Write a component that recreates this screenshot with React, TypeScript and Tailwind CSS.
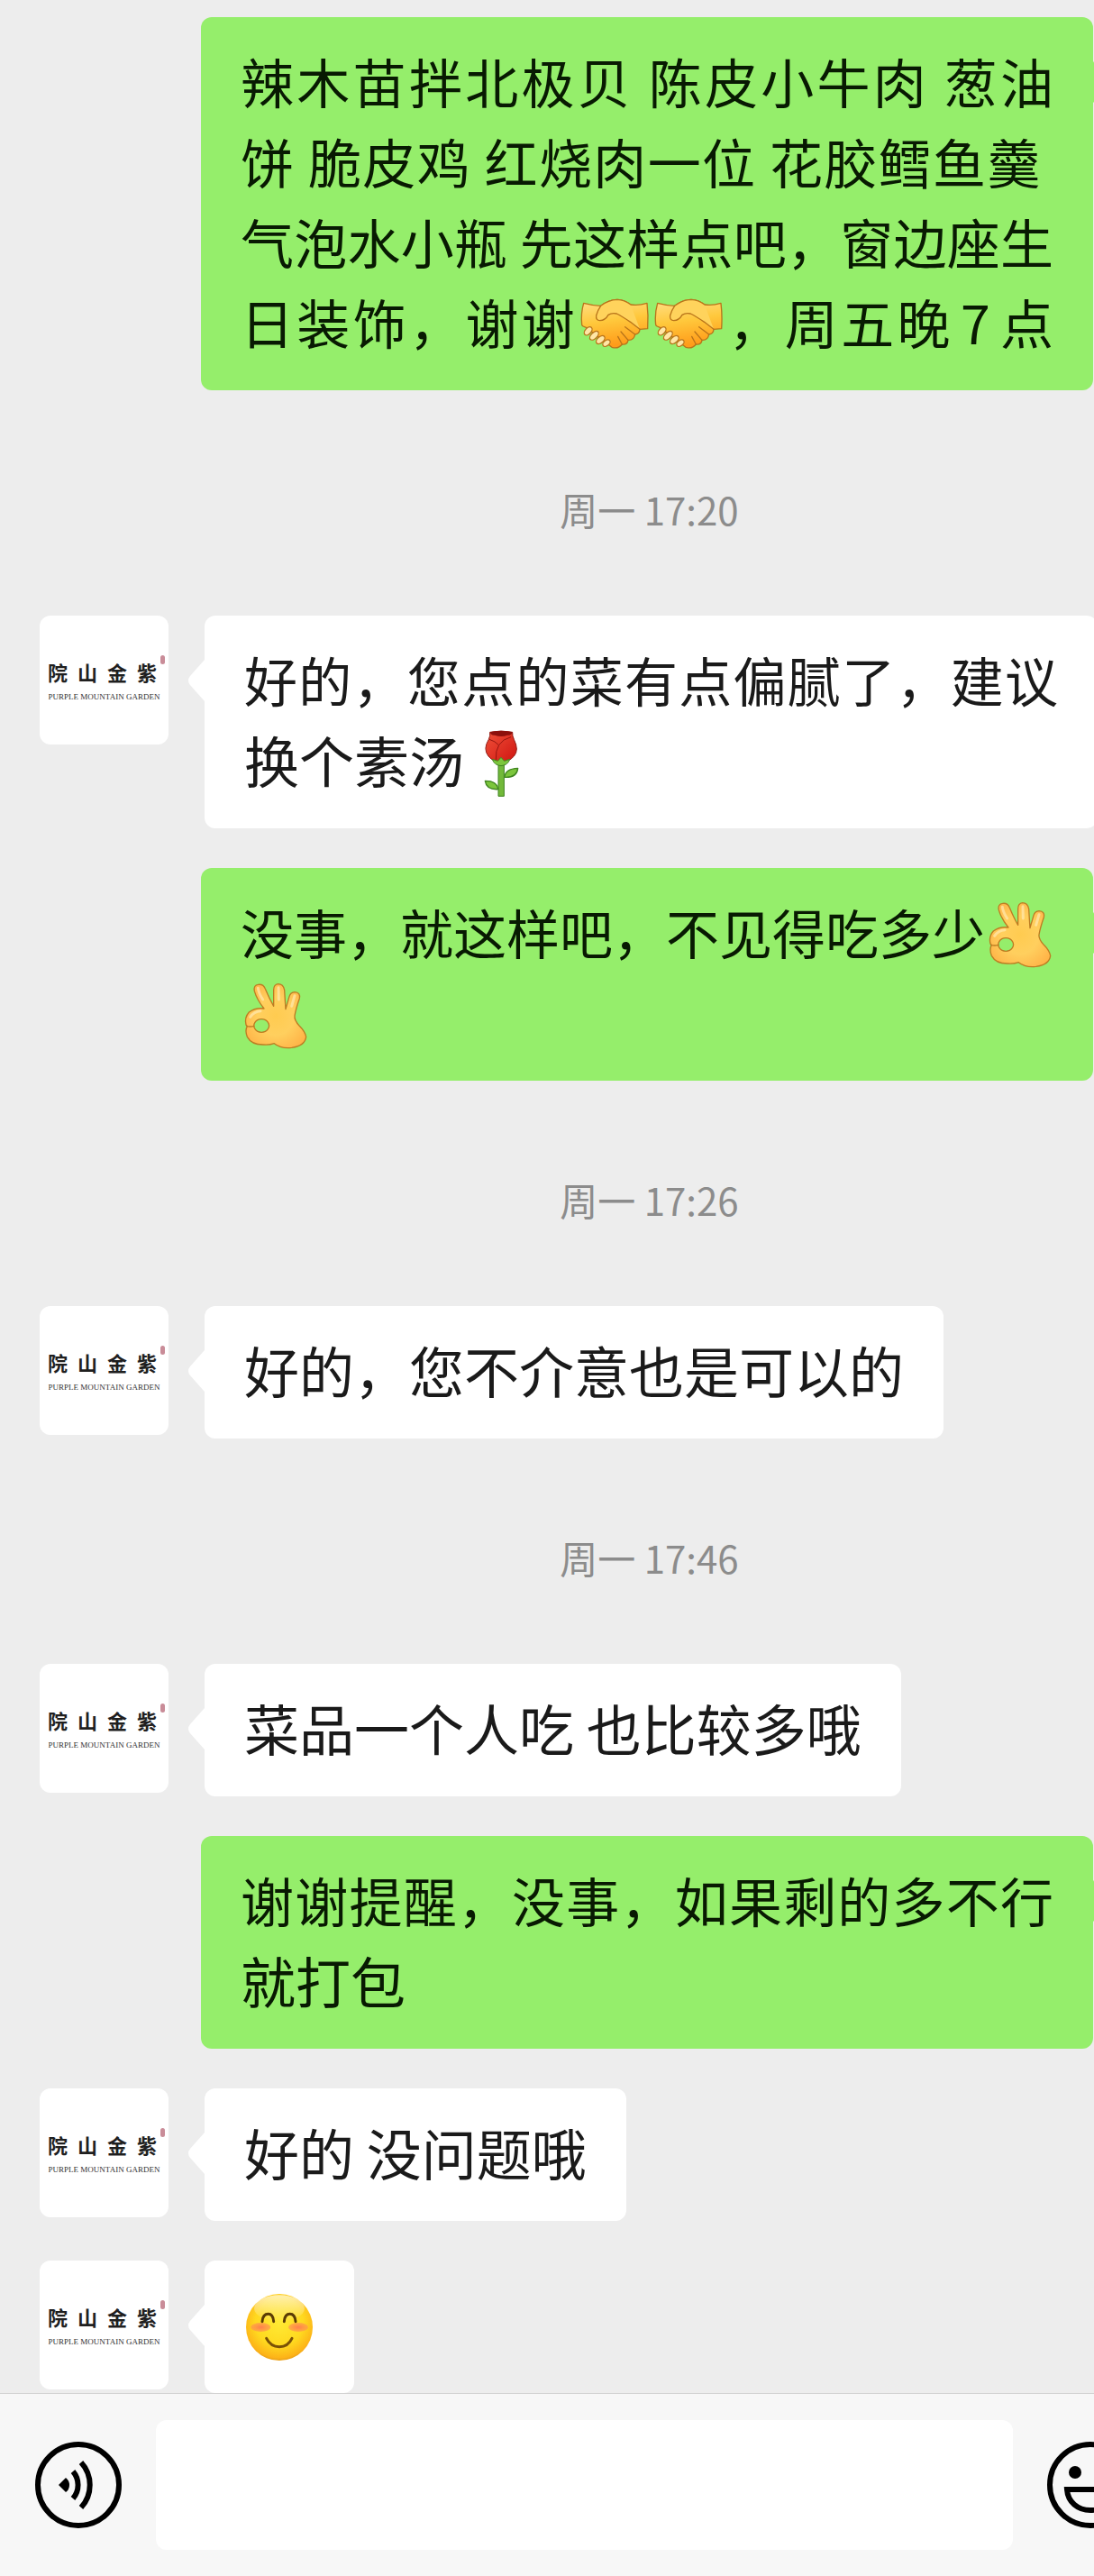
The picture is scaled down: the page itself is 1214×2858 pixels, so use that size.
import type { ReactNode } from "react";

function Handshake() {
  return (
    <svg viewBox="0 0 234 234" role="img" aria-label="握手" className="mx-0.5 inline-block size-[78px] align-[-16px]">
      <defs>
        <linearGradient id="shake" x1="0" y1="0" x2="0.2" y2="1">
          <stop offset="0" stopColor="#ffe08a" />
          <stop offset="0.5" stopColor="#ffc83c" />
          <stop offset="1" stopColor="#ff9c1a" />
        </linearGradient>
      </defs>
      <g fill="url(#shake)" stroke="#b9741a" strokeWidth="4" strokeLinejoin="round" strokeLinecap="round">
        <path d="M14 49 Q45 57 71 58 Q96 38 126 37 Q152 38 171 54 Q196 58 225 49 Q230 90 227 134 L201 136 Q200 152 185 153 Q182 173 162 172 Q160 188 142 186 Q130 202 108 196 L22 130 Q8 126 8 121 Q4 84 14 49Z" />
        <path d="M171 54 Q150 38 126 37 Q96 38 71 58 Q60 74 56 90 Q54 106 68 107 Q86 106 96 88 Q108 80 124 84 Q140 92 170 112 L201 136" fill="#ffd35c" />
        <path d="M152 128 L185 153 M138 144 L162 172 M128 160 L142 186" fill="none" />
        <ellipse cx="29" cy="142" rx="10" ry="16" transform="rotate(42 29 142)" fill="#ffe6a6" />
        <ellipse cx="49" cy="157" rx="10" ry="18" transform="rotate(45 49 157)" fill="#ffe6a6" />
        <ellipse cx="70" cy="171" rx="10" ry="17" transform="rotate(48 70 171)" fill="#ffe6a6" />
        <ellipse cx="90" cy="182" rx="9" ry="14" transform="rotate(52 90 182)" fill="#ffe6a6" />
      </g>
    </svg>
  );
}

function OkHand() {
  return (
    <svg viewBox="0 0 234 234" role="img" aria-label="OK" className="inline-block size-[78px] align-[-16px]">
      <defs>
        <radialGradient id="okhand" cx="0.5" cy="0.5" r="0.6">
          <stop offset="0" stopColor="#ffcb50" />
          <stop offset="0.5" stopColor="#ffcf5e" />
          <stop offset="1" stopColor="#ffb347" />
        </radialGradient>
      </defs>
      <path
        d="M59 16 Q42 18 46 38 Q54 66 78 96 Q50 92 28 108 Q12 126 18 150 L22 155 Q14 168 22 190 Q36 216 74 216 Q96 218 112 212 Q134 230 170 226 Q214 220 218 190 Q214 172 196 154 Q178 134 180 120 Q184 96 196 62 Q200 42 180 41 Q166 42 162 56 L150 98 Q148 70 146 34 Q142 14 125 14 Q110 16 110 34 L110 88 Q96 64 82 30 Q76 14 59 16Z M70 131 A25 22 0 1 1 69 131Z"
        fill="url(#okhand)"
        fillRule="evenodd"
        stroke="#bd7c22"
        strokeWidth="4"
        strokeLinejoin="round"
      />
      <path d="M20 154 Q32 158 45 154" fill="none" stroke="#bd7c22" strokeWidth="4" strokeLinecap="round" />
      <path
        d="M58 28 Q60 44 74 66 M126 26 L127 66 M180 53 L170 88 M32 124 Q44 106 66 104"
        fill="none"
        stroke="#ffe9b0"
        strokeWidth="9"
        strokeLinecap="round"
        opacity="0.7"
      />
    </svg>
  );
}

function Rose() {
  return (
    <svg viewBox="0 0 234 234" role="img" aria-label="玫瑰" className="mx-0.5 inline-block size-[78px] align-[-16px]">
      <defs>
        <linearGradient id="rose" x1="0" y1="0" x2="1" y2="1">
          <stop offset="0" stopColor="#f0523a" />
          <stop offset="1" stopColor="#cf1410" />
        </linearGradient>
      </defs>
      <path d="M108 112 H127 V229 H108Z" fill="#72b93a" stroke="#3f8420" strokeWidth="3" />
      <path d="M129 166 Q130 138 173 136 Q170 168 129 166Z" fill="#7cc63c" stroke="#3f8420" strokeWidth="4" strokeLinejoin="round" />
      <path d="M107 206 Q104 178 64 178 Q68 208 107 206Z" fill="#7cc63c" stroke="#3f8420" strokeWidth="4" strokeLinejoin="round" />
      <path
        d="M80 16 Q117 8 155 16 Q154 28 160 40 Q178 76 160 96 Q142 116 117 116 Q92 116 75 96 Q56 72 76 40 Q82 28 80 16Z"
        fill="url(#rose)"
        stroke="#8f1a14"
        strokeWidth="3"
      />
      <path d="M80 16 Q117 8 155 16 Q152 28 138 26 Q118 34 96 26 Q84 28 80 16Z" fill="#8c100c" />
      <path d="M150 32 Q96 46 100 108 M78 40 Q98 46 108 58" fill="none" stroke="#95150f" strokeWidth="3" />
      <path d="M88 106 L106 112 L117 100 L128 112 L146 106 Q140 126 117 128 Q94 126 88 106Z" fill="#7cc63c" stroke="#3f8420" strokeWidth="3" strokeLinejoin="round" />
    </svg>
  );
}

function Smile() {
  return (
    <svg viewBox="0 0 234 234" role="img" aria-label="愉快" className="inline-block size-[78px] align-[-16px]">
      <defs>
        <radialGradient id="face" cx="0.5" cy="0.42" r="0.6">
          <stop offset="0" stopColor="#ffea35" />
          <stop offset="0.6" stopColor="#ffd91f" />
          <stop offset="0.9" stopColor="#fdb318" />
          <stop offset="1" stopColor="#df9515" />
        </radialGradient>
        <linearGradient id="shine" x1="0" y1="0" x2="0" y2="1">
          <stop offset="0" stopColor="#fff" stopOpacity="0.65" />
          <stop offset="1" stopColor="#fff" stopOpacity="0" />
        </linearGradient>
        <radialGradient id="blush">
          <stop offset="0" stopColor="#ff7f4d" />
          <stop offset="1" stopColor="#ff9a4a" stopOpacity="0.7" />
        </radialGradient>
      </defs>
      <circle cx="117" cy="117" r="111" fill="url(#face)" />
      <ellipse cx="117" cy="54" rx="84" ry="44" fill="url(#shine)" />
      <ellipse cx="55" cy="117" rx="33" ry="15" fill="url(#blush)" />
      <ellipse cx="180" cy="117" rx="33" ry="15" fill="url(#blush)" />
      <g fill="none" strokeWidth="9" strokeLinecap="round">
        <path d="M60 98 Q62 73 80 73 Q96 73 98 98 M133 98 Q135 73 152 73 Q169 73 171 98" stroke="#5b3c05" />
        <path d="M74 154 Q88 182 117 182 Q146 182 159 154" stroke="#7a5106" />
      </g>
    </svg>
  );
}

function Avatar() {
  return (
    <div className="relative h-[143px] w-[143px] shrink-0 rounded-xl bg-white px-[9px] pt-[46px] text-[#1f1f1f]">
      <div
        className="flex justify-between pr-1 text-[22px] font-bold leading-8"
        style={{ fontFamily: '"Noto Sans CJK TC", sans-serif' }}
      >
        <span>院</span>
        <span>山</span>
        <span>金</span>
        <span>紫</span>
      </div>
      <p
        className="mt-1 whitespace-nowrap text-center text-[9px] leading-4 text-[#333]"
        style={{ fontFamily: '"Liberation Serif", serif' }}
      >
        PURPLE MOUNTAIN GARDEN
      </p>
      <span className="absolute right-1 top-11 h-2.5 w-[5px] rounded-sm bg-[#c98c98]" />
    </div>
  );
}

function Tail({ className }: { className: string }) {
  return (
    <svg viewBox="0 0 18 46" className={`absolute top-[49px] h-[46px] w-[18px] ${className}`} aria-hidden="true">
      <path d="M18 0 L2 18 Q-2 23 2 28 L18 46Z" fill="currentColor" />
    </svg>
  );
}

// A full line is spread to the width of the bubble
function Line({ children }: { children: ReactNode }) {
  return <span className="block whitespace-nowrap text-justify [text-align-last:justify]">{children}</span>;
}

// The rest of a message, at its natural width
function LastLine({ children }: { children: ReactNode }) {
  return <span className="block text-[61px]">{children}</span>;
}

function Received({ wide = false, children }: { wide?: boolean; children: ReactNode }) {
  return (
    <div className="flex items-start gap-10 pl-11">
      <Avatar />
      <div
        className={
          wide
            ? "relative -mr-1 flex-1 rounded-xl bg-white px-11 pb-8 pt-[26px] text-[59px] leading-[89px] text-[#1a1a1a]"
            : "relative rounded-xl bg-white px-11 pb-8 pt-[26px] text-[61px] leading-[89px] text-[#1a1a1a]"
        }
      >
        <Tail className="right-full text-white" />
        {children}
      </div>
    </div>
  );
}

function Sent({ children }: { children: ReactNode }) {
  return (
    <div className="relative ml-[223px] mr-px rounded-xl bg-[#95ee6b] px-11 pb-8 pt-[26px] text-[59px] leading-[89px] text-[#081a02]">
      <Tail className="left-full -scale-x-100 text-[#95ee6b]" />
      {children}
    </div>
  );
}

function Time({ children }: { children: ReactNode }) {
  return (
    <p className="-my-11 ml-[227px] pb-[88px] pt-[102px] text-center text-[42px] leading-[60px] text-[#8c8c8c]">
      {children}
    </p>
  );
}

function VoiceIcon() {
  return (
    <svg viewBox="0 0 96 96" className="size-24" fill="none" stroke="#000" strokeWidth="6" aria-hidden="true">
      <circle cx="48" cy="48" r="45" />
      <path d="M26 48 L34 40 Q38 43 38 48 Q38 53 34 56Z" fill="#000" stroke="none" />
      <path d="M42 33 A23 23 0 0 1 42 63" />
      <path d="M51 23 A37 37 0 0 1 51 73" />
    </svg>
  );
}

function EmojiIcon() {
  return (
    <svg viewBox="0 0 96 96" className="size-24" fill="none" stroke="#000" strokeWidth="6" aria-hidden="true">
      <circle cx="48" cy="48" r="45" />
      <circle cx="31" cy="34" r="7" fill="#000" stroke="none" />
      <circle cx="65" cy="34" r="7" fill="#000" stroke="none" />
      <path d="M22 53 H74 C73 67 62 76 48 76 C34 76 23 67 22 53Z" />
    </svg>
  );
}

export default function App() {
  return (
    <div
      className="overflow-hidden bg-[#ededed]"
      style={{ fontFamily: '"Noto Sans CJK SC", "Noto Sans", sans-serif' }}
      lang="zh-CN"
    >
      {/* Messages */}
      <main className="flex flex-col gap-11 pt-[19px]">
        <Sent>
          <Line>辣木苗拌北极贝 陈皮小牛肉 葱油</Line>
          <Line>饼 脆皮鸡 红烧肉一位 花胶鳕鱼羹&nbsp;</Line>
          <Line>气泡水小瓶 先这样点吧，窗边座生</Line>
          <Line>
            日装饰，谢谢
            <Handshake />
            <Handshake />
            ，周五晚<span className="mx-2">7</span>点
          </Line>
        </Sent>
        <Time>周一 17:20</Time>
        <Received wide>
          <Line>好的，您点的菜有点偏腻了，建议</Line>
          <LastLine>
            换个素汤
            <Rose />
          </LastLine>
        </Received>
        <Sent>
          <Line>
            没事，就这样吧，不见得吃多少
            <OkHand />
          </Line>
          <LastLine>
            <OkHand />
          </LastLine>
        </Sent>
        <Time>周一 17:26</Time>
        <Received>好的，您不介意也是可以的</Received>
        <Time>周一 17:46</Time>
        <Received>菜品一个人吃 也比较多哦</Received>
        <Sent>
          <Line>谢谢提醒，没事，如果剩的多不行</Line>
          <LastLine>就打包</LastLine>
        </Sent>
        <Received>好的 没问题哦</Received>
        <Received>
          <Smile />
        </Received>
      </main>

      {/* Input bar */}
      <footer className="flex items-center gap-[38px] border-t border-[#d2d2d2] bg-[#f7f7f7] py-[29px] pl-[39px]">
        <button type="button" aria-label="语音" className="shrink-0">
          <VoiceIcon />
        </button>
        <input
          type="text"
          aria-label="消息"
          className="h-36 min-w-0 flex-1 rounded-xl bg-white px-8 text-[59px] text-[#1a1a1a] outline-none"
        />
        <button type="button" aria-label="表情" className="-mr-11 shrink-0">
          <EmojiIcon />
        </button>
      </footer>
    </div>
  );
}
